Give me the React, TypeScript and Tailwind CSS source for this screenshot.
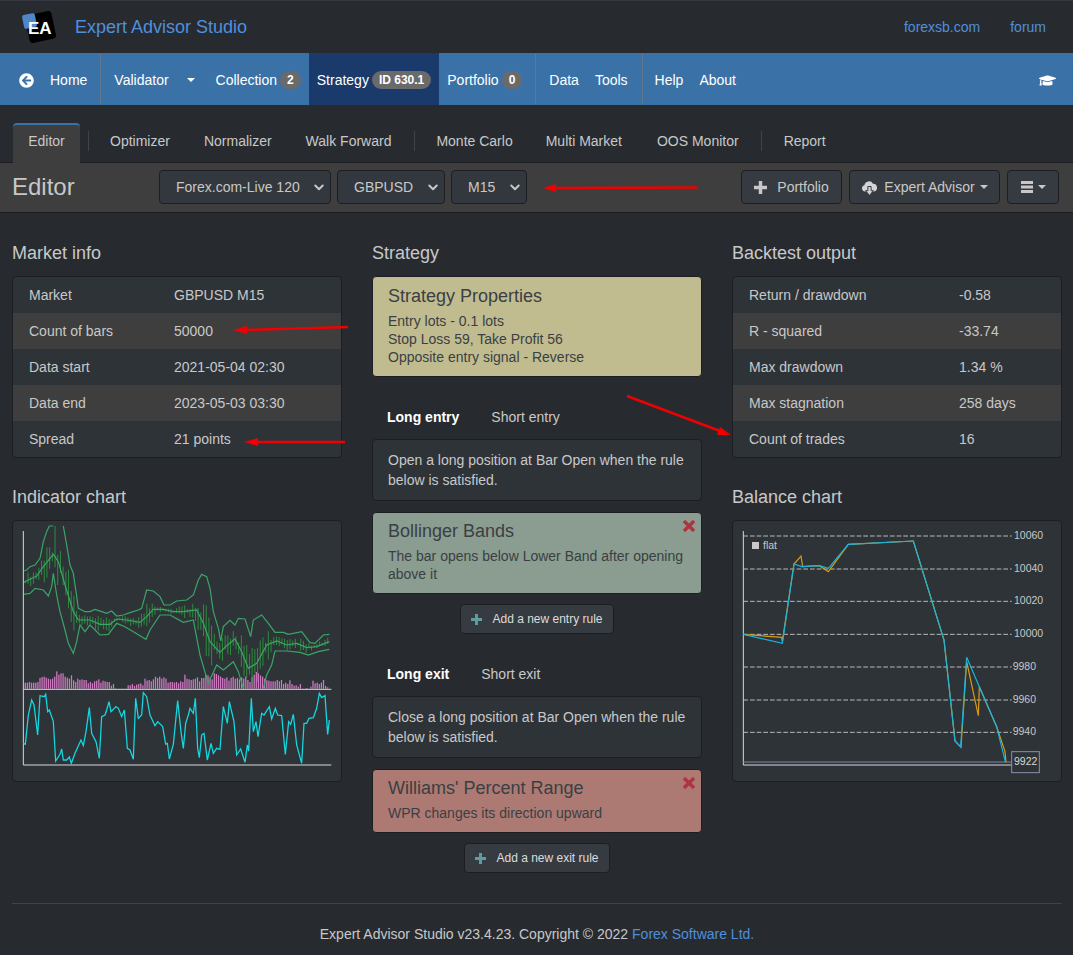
import React from "react";
import { FaArrowCircleLeft, FaGraduationCap } from "react-icons/fa";

const upper = "40,168 50,165 60,155 75,150 90,130 100,80 110,50 118,33 130,33 M160,33 170,90 180,150 190,175 198,230 205,280 225,290 240,290 255,283 275,290 290,295 305,288 320,303 340,300 360,293 385,285 395,280 410,225 430,228 450,245 462,270 480,270 500,258 530,255 550,240 565,195 575,178 590,185 600,220 610,290 625,340 632,378 640,335 660,316 675,330 685,310 705,312 722,365 730,315 755,300 775,325 795,352 820,352 835,358 875,350 900,383 915,385 940,360 958,358";
const middle = "40,203 55,195 80,183 100,155 130,118 145,140 165,210 190,290 205,315 240,315 270,328 300,328 320,312 350,315 390,322 410,305 430,283 460,283 490,290 520,290 560,285 580,325 600,380 630,412 650,392 675,372 695,410 715,460 740,445 770,390 800,378 830,390 860,385 890,398 920,395 958,380";
const lower = "40,238 60,235 75,220 100,225 115,243 125,215 130,175 140,240 150,290 165,345 175,385 190,415 200,380 210,330 225,350 240,330 270,360 295,358 320,325 345,335 370,350 395,365 408,373 420,345 450,300 480,300 520,322 550,315 570,420 595,505 620,450 640,465 670,440 685,470 700,520 M760,520 770,480 785,450 795,408 830,408 870,412 895,420 925,410 958,403";
const cyan = "40,685 46,688 55,600 65,555 72,570 83,660 90,542 103,545 107,538 113,590 118,585 130,620 137,738 150,718 155,702 160,735 170,735 178,726 184,745 195,715 213,675 220,692 228,650 238,578 245,655 258,680 268,730 275,605 285,600 290,585 297,560 303,590 318,575 325,580 335,605 343,585 352,700 360,705 370,733 377,550 385,610 395,600 400,533 410,545 420,600 435,632 443,620 458,635 467,687 472,685 478,732 490,688 503,557 513,650 520,700 527,625 535,600 540,580 550,595 556,550 563,700 568,728 575,660 582,655 592,735 603,685 610,715 620,700 630,703 640,575 652,625 658,560 672,620 680,720 692,702 705,742 712,690 716,708 724,550 730,650 738,620 744,665 755,595 762,600 778,575 785,612 796,580 803,600 815,602 826,718 836,620 842,628 850,598 860,690 875,745 882,625 890,625 897,610 910,608 920,580 928,535 935,548 945,542 953,658 958,615";
const orange = "40,358 155,367 157,380 192,147 213,123 218,155 268,152 295,170 355,88 550,78 642,375 675,678 693,697 710,440 745,602 748,515 800,635 825,710 828,742";
const blue = "40,358 157,385 192,147 215,155 268,152 295,160 355,88 550,78 642,375 675,678 692,695 710,427 748,515 800,635 826,740";

function pts(s: string) {
  return s.split(" M").map((p) => p.split(" ").map((q) => q.split(",").map(Number)));
}
function at(s: string, x: number) {
  for (const seg of pts(s)) {
    for (let i = 1; i < seg.length; i++) {
      if (x >= seg[i - 1][0] && x <= seg[i][0]) {
        const t = (x - seg[i - 1][0]) / (seg[i][0] - seg[i - 1][0] || 1);
        return seg[i - 1][1] + t * (seg[i][1] - seg[i - 1][1]);
      }
    }
  }
  return 520;
}
function toD(s: string) {
  return "M" + s.split(" ").join(" L").replace(/ LM/g, " M");
}

const vols = [18,18,20,18,18,18,20,32,35,36,33,30,28,30,36,52,42,46,46,36,33,30,40,25,20,30,26,28,26,26,16,20,16,22,24,28,18,24,22,20,20,9,14,1,0,0,0,0,0,10,10,14,8,12,14,16,10,30,24,26,22,28,36,32,36,30,34,30,18,20,20,18,20,16,22,20,42,30,28,26,28,30,34,22,32,32,42,40,34,28,46,44,40,36,32,30,34,24,32,36,30,32,28,34,30,36,26,20,34,42,50,46,40,36,30,25,24,22,22,22,26,22,26,14,18,14,25,14,9,10,6,14,0,0,2,0,6,24,16,18,14,18,26,8,4];
const Indicator = () => {
  const bars: React.ReactNode[] = [];
  for (let i = 0; i < 113; i++) {
    const x = 46 + i * 8.1;
    const m = at(middle, x);
    const w = (at(lower, x) - at(upper, x)) / 2;
    const r = Math.abs(Math.sin(i * 12.9898) * 43758.5453) % 1;
    const r2 = Math.abs(Math.sin(i * 78.233) * 12543.123) % 1;
    bars.push(<line key={i} x1={x} x2={x} y1={Math.max(65, m - w * (0.1 + r * 0.55))} y2={Math.min(520, m + w * (0.1 + r2 * 0.55))} stroke="#2c9a3c" strokeWidth="2.6" />);
  }
  return (
    <svg viewBox="9 18 984 780" className="block w-[328px] h-[260px]">
      {vols.map((v, i) => (
        <rect key={i} x={44 + i * 6.3} y={521 - v} width="3.8" height={v} fill="#cf78c2" />
      ))}
      {bars}
      <path d={toD(upper)} fill="none" stroke="#3ba567" strokeWidth="3.6" />
      <path d={toD(middle)} fill="none" stroke="#3ba567" strokeWidth="3.6" />
      <path d={toD(lower)} fill="none" stroke="#3ba567" strokeWidth="3.6" />
      <path d="M40,48 V750 H964 M40,523 H964" fill="none" stroke="#d8d8d8" strokeWidth="3" />
      <path d={toD(cyan)} fill="none" stroke="#14d8e2" strokeWidth="3.8" />
    </svg>
  );
};

const ys: [number, string][] = [[63, "10060"], [162, "10040"], [259, "10020"], [358, "10000"], [456, "9980"], [555, "9960"], [652, "9940"]];
const Balance = () => (
  <svg viewBox="9 18 984 780" className="block w-[328px] h-[260px]">
    {ys.map(([y, l]) => (
      <g key={l}>
        <line x1="40" x2="845" y1={y} y2={y} stroke="#d0d0d0" strokeWidth="2.6" strokeDasharray="14 6" />
        <text x={l.length === 5 ? 852 : 848} y={y + 8} fontSize="31.5" fill="#c8c8c8" fontFamily="'Liberation Sans',sans-serif">{l}</text>
      </g>
    ))}
    <path d="M40,48 V750 H845" fill="none" stroke="#d8d8d8" strokeWidth="3" />
    <line x1="40" x2="845" y1="741" y2="741" stroke="#7f86a6" strokeWidth="3" />
    <rect x="66" y="81" width="21" height="21" fill="#c8c8c8" />
    <text x="99" y="103" fontSize="31.5" fill="#c8c8c8" fontFamily="'Liberation Sans',sans-serif">flat</text>
    <path d={toD(orange)} fill="none" stroke="#d99a13" strokeWidth="3.6" />
    <path d={toD(blue)} fill="none" stroke="#16b4e0" strokeWidth="3.6" />
    <rect x="845" y="710" width="83" height="63" fill="#2e3338" stroke="#8a90ad" strokeWidth="3" />
    <text x="852" y="751" fontSize="31.5" fill="#d8d8d8" fontFamily="'Liberation Sans',sans-serif">9922</text>
  </svg>
);

const Plus = ({ size, color }: { size: number; color: string }) => (
  <svg width={size} height={size} viewBox="0 0 12 12" fill={color}><path d="M4.4 0h3.2v4.4H12v3.2H7.6V12H4.4V7.6H0V4.4h4.4z" /></svg>
);
const Cross = () => (
  <svg className="absolute right-[6px] top-[7px]" width="12" height="12" viewBox="0 0 12 12" fill="none" stroke="#b0333f" strokeWidth="3.4"><path d="M1 1l10 10M11 1L1 11" /></svg>
);
const Cloud = () => (
  <svg width="17" height="17" viewBox="0 0 17 17">
    <path d="M4 12.5a3.2 3.2 0 0 1-.6-6.3A4.6 4.6 0 0 1 12 4.8a3.9 3.9 0 0 1 1 7.7z" fill="#d4d4d4" />
    <path d="M6.9 7.5h3.2v4.2h2.3L8.5 16.4 4.6 11.7h2.3z" fill="#d4d4d4" stroke="#363b41" strokeWidth="1" />
  </svg>
);
const Burger = () => (
  <svg width="12" height="12" viewBox="0 0 12 12" fill="#c8c8c8"><path d="M0 0h12v3H0zM0 4.5h12v3H0zM0 9h12v3H0z" /></svg>
);

const Caret = ({ className = "" }: { className?: string }) => (
  <span className={"inline-block w-0 h-0 border-x-[4px] border-x-transparent border-t-[4px] border-t-current " + className} />
);
const Badge = ({ children }: { children: React.ReactNode }) => (
  <span className="ml-[3px] h-[18px] px-[7px] rounded-full bg-[#6a6a6a] text-white text-[12px] font-bold leading-[18px]">{children}</span>
);
const Sep = ({ className = "" }: { className?: string }) => <div className={"w-px h-[50px] bg-[#63778c] " + className} />;
const TabSep = ({ className = "" }: { className?: string }) => <div className={"w-px h-[20px] bg-[#3f4448] " + className} />;

const Select = ({ w, label }: { w: string; label: string }) => (
  <div className={w + " h-[34px] flex items-center justify-between pl-[16px] pr-[5px] bg-[#32383e] border border-[#1c1e22] rounded text-[#c8c8c8] text-sm"}>
    <span>{label}</span>
    <svg width="12" height="12" viewBox="0 0 16 16" fill="none" stroke="#c8c8c8" strokeWidth="2.6" strokeLinecap="round" strokeLinejoin="round"><path d="M3 6l5 5 5-5" /></svg>
  </div>
);

const Btn = ({ w, children }: { w: string; children: React.ReactNode }) => (
  <div className={w + " h-[34px] flex items-center justify-center bg-[#363b41] border border-[#1c1e22] rounded text-[#c8c8c8] text-sm"}>{children}</div>
);

const Table = ({ rows, valueCol }: { rows: [string, string][]; valueCol: string }) => (
  <div className="mt-[13px] border border-[#1c1e22] rounded bg-[#2e3338] overflow-hidden">
    {rows.map(([a, b], i) => (
      <div key={a} className={"h-9 flex items-center pl-4 text-sm text-[#c8c8c8] " + (i % 2 ? "bg-[#3e3e3e]" : "")}>
        <span className={valueCol}>{a}</span>
        <span>{b}</span>
      </div>
    ))}
  </div>
);

const H = ({ children, className = "" }: { children: React.ReactNode; className?: string }) => (
  <h4 className={"text-[18px] leading-5 text-[#c8c8c8] " + className}>{children}</h4>
);
const Card = ({ children, className = "" }: { children: React.ReactNode; className?: string }) => (
  <div className={"border border-[#1c1e22] rounded " + className}>{children}</div>
);
const Info = ({ children }: { children: React.ReactNode }) => (
  <Card className="bg-[#2e3338] h-[62px] px-[15px] py-[10px] text-sm leading-5 text-[#c8c8c8]">{children}</Card>
);
const Rule = ({ title, bg, children, h }: { title: string; bg: string; children: React.ReactNode; h: string }) => (
  <Card className={"relative mt-[11px] px-[15px] pt-[8px] text-[#3a3f44] " + bg + " " + h}>
    <div className="text-[18px] leading-[20px]">{title}</div>
    <div className="mt-[6px] text-sm leading-[18px]">{children}</div>
    <Cross />
  </Card>
);
const Add = ({ w, children }: { w: string; children: React.ReactNode }) => (
  <div className={w + " mt-[10px] mx-auto h-[30px] flex items-center justify-center bg-[#363b41] border border-[#1c1e22] rounded text-[#dcdcdc] text-[12px]"}>
    <span className="mr-[10px] flex"><Plus size={11} color="#5f9ea0" /></span>
    {children}
  </div>
);
const SubTabs = ({ a, b, gap }: { a: string; b: string; gap: string }) => (
  <div className="h-[62px] pl-[15px] flex items-center pt-[18px] text-sm">
    <span className="font-bold text-white">{a}</span>
    <span className={gap + " text-[#c8c8c8]"}>{b}</span>
  </div>
);

export default function App() {
  return (
    <div className="relative w-[1073px] h-[955px] overflow-hidden bg-[#272b30] font-['Liberation_Sans',Arial,sans-serif] text-[#c8c8c8]">
      <header className="h-[53px] flex items-center border-t border-[#343841] pl-[24px] pr-[27px]">
        <div className="relative w-[32px] h-[34px]">
          <div className="absolute left-[3px] top-[3px] w-[27px] h-[28px] rounded-[3px] bg-black rotate-[-12deg]" />
          <div className="absolute left-[-1px] top-[4px] w-[13px] h-[14px] rounded-[2px] bg-[#4f86c6] rotate-[-12deg]" />
          <span className="absolute left-[4px] top-[8px] text-white text-[17px] font-bold leading-[22px]">EA</span>
        </div>
        <span className="ml-[19px] text-[18px] text-[#4f8fdc]">Expert Advisor Studio</span>
        <span className="ml-auto text-sm text-[#4f8fdc]">forexsb.com</span>
        <span className="ml-[30px] text-sm text-[#4f8fdc]">forum</span>
      </header>

      <nav className="h-[52px] bg-[#3a72a8] flex items-center text-sm text-white [&_span]:mt-[2px]">
        <FaArrowCircleLeft className="ml-[19px] mt-[2px] text-[15px]" />
        <span className="ml-[16px]">Home</span>
        <Sep className="ml-[13px]" />
        <span className="ml-[13px]">Validator</span>
        <Caret className="ml-[18px]" />
        <span className="ml-[21px]">Collection</span>
        <Badge>2</Badge>
        <div className="ml-2 h-full pl-2 pr-2 bg-[#1a3a6b] flex items-center">
          <span>Strategy</span>
          <Badge>ID 630.1</Badge>
        </div>
        <span className="ml-2">Portfolio</span>
        <Badge>0</Badge>
        <Sep className="ml-[13px]" />
        <span className="ml-[13px]">Data</span>
        <span className="ml-4">Tools</span>
        <Sep className="ml-[14px]" />
        <span className="ml-[12px]">Help</span>
        <span className="ml-4">About</span>
        <FaGraduationCap className="ml-auto mr-[17px] mt-[2px] text-[17px]" />
      </nav>

      <div className="h-[57px] pt-[15px] pl-[13px] flex items-center text-sm">
        <div className="relative z-10 self-end -mb-px h-[40px] w-[67px] pb-[6px] flex items-center justify-center bg-[#3e3e3e] border-t-2 border-t-[#3a72a8] rounded-t">Editor</div>
        <TabSep className="ml-2" />
        <span className="ml-[21px]">Optimizer</span>
        <span className="ml-[34px]">Normalizer</span>
        <span className="ml-[34px]">Walk Forward</span>
        <TabSep className="ml-[23px]" />
        <span className="ml-[21px]">Monte Carlo</span>
        <span className="ml-[33px]">Multi Market</span>
        <span className="ml-[35px]">OOS Monitor</span>
        <TabSep className="ml-[22px]" />
        <span className="ml-[22px]">Report</span>
      </div>

      <div className="h-[51px] bg-[#3e3e3e] border-y border-[#1c1e22] flex items-center pl-3 pb-px">
        <span className="w-[147px] text-[24px]">Editor</span>
        <Select w="w-[172px]" label="Forex.com-Live 120" />
        <div className="w-[6px]" />
        <Select w="w-[108px]" label="GBPUSD" />
        <div className="w-[6px]" />
        <Select w="w-[76px]" label="M15" />
        <div className="ml-[214px] flex gap-[7px]">
          <Btn w="w-[101px]"><span className="mr-[10px] flex"><Plus size={13} color="#c8c8c8" /></span>Portfolio</Btn>
          <Btn w="w-[151px]"><span className="mr-[6px] flex"><Cloud /></span>Expert Advisor<Caret className="ml-[5px]" /></Btn>
          <Btn w="w-[52px]"><span className="mr-[5px] flex"><Burger /></span><Caret /></Btn>
        </div>
      </div>

      <main className="grid grid-cols-[330px_330px_330px] gap-x-[30px] px-3 pt-[30px]">
        <section>
          <H>Market info</H>
          <Table valueCol="w-[145px]" rows={[["Market", "GBPUSD M15"], ["Count of bars", "50000"], ["Data start", "2021-05-04 02:30"], ["Data end", "2023-05-03 03:30"], ["Spread", "21 points"]]} />
          <H className="mt-[29px]">Indicator chart</H>
          <Card className="mt-[13px] bg-[#2e3338]"><Indicator /></Card>
        </section>
        <section>
          <H>Strategy</H>
          <Card className="mt-[13px] h-[101px] bg-[#c1bc8f] px-[15px] pt-[9px] text-[#3a3f44]">
            <div className="text-[18px] leading-[20px]">Strategy Properties</div>
            <div className="mt-[6px] text-sm leading-[18px]">
              Entry lots - 0.1 lots<br />Stop Loss 59, Take Profit 56<br />Opposite entry signal - Reverse
            </div>
          </Card>
          <SubTabs a="Long entry" b="Short entry" gap="ml-8" />
          <Info>Open a long position at Bar Open when the rule below is satisfied.</Info>
          <Rule title="Bollinger Bands" bg="bg-[#8a9d90]" h="h-[82px]">The bar opens below Lower Band after opening above it</Rule>
          <Add w="w-[154px]">Add a new entry rule</Add>
          <SubTabs a="Long exit" b="Short exit" gap="ml-8" />
          <Info>Close a long position at Bar Open when the rule below is satisfied.</Info>
          <Rule title="Williams' Percent Range" bg="bg-[#ac7a73]" h="h-[64px]">WPR changes its direction upward</Rule>
          <Add w="w-[146px]">Add a new exit rule</Add>
        </section>
        <section>
          <H>Backtest output</H>
          <Table valueCol="w-[210px]" rows={[["Return / drawdown", "-0.58"], ["R - squared", "-33.74"], ["Max drawdown", "1.34 %"], ["Max stagnation", "258 days"], ["Count of trades", "16"]]} />
          <H className="mt-[29px]">Balance chart</H>
          <Card className="mt-[13px] bg-[#2e3338]"><Balance /></Card>
        </section>
      </main>

      <footer className="absolute left-3 right-[11px] top-[903px] border-t border-[#3f4448] pt-[20px] text-center text-sm">
        Expert Advisor Studio v23.4.23. Copyright © 2022 <span className="text-[#4f8fdc]">Forex Software Ltd.</span>
      </footer>

      <svg className="absolute inset-0 pointer-events-none" width="1073" height="955" fill="none" stroke="#f00000" strokeWidth="2.5">
        <path d="M697,187.5 L555,188" />
        <path d="M543,188 L556,184 L556,192 Z" fill="#f00000" stroke="none" />
        <path d="M348,327 L245,330" />
        <path d="M233,330 L247,326 L247,334 Z" fill="#f00000" stroke="none" />
        <path d="M345,442 L256,442" />
        <path d="M244,442 L258,438 L258,446 Z" fill="#f00000" stroke="none" />
        <path d="M627,396 L720,431" />
        <path d="M731,435 L717,435 L720,427 Z" fill="#f00000" stroke="none" />
      </svg>
    </div>
  );
}
